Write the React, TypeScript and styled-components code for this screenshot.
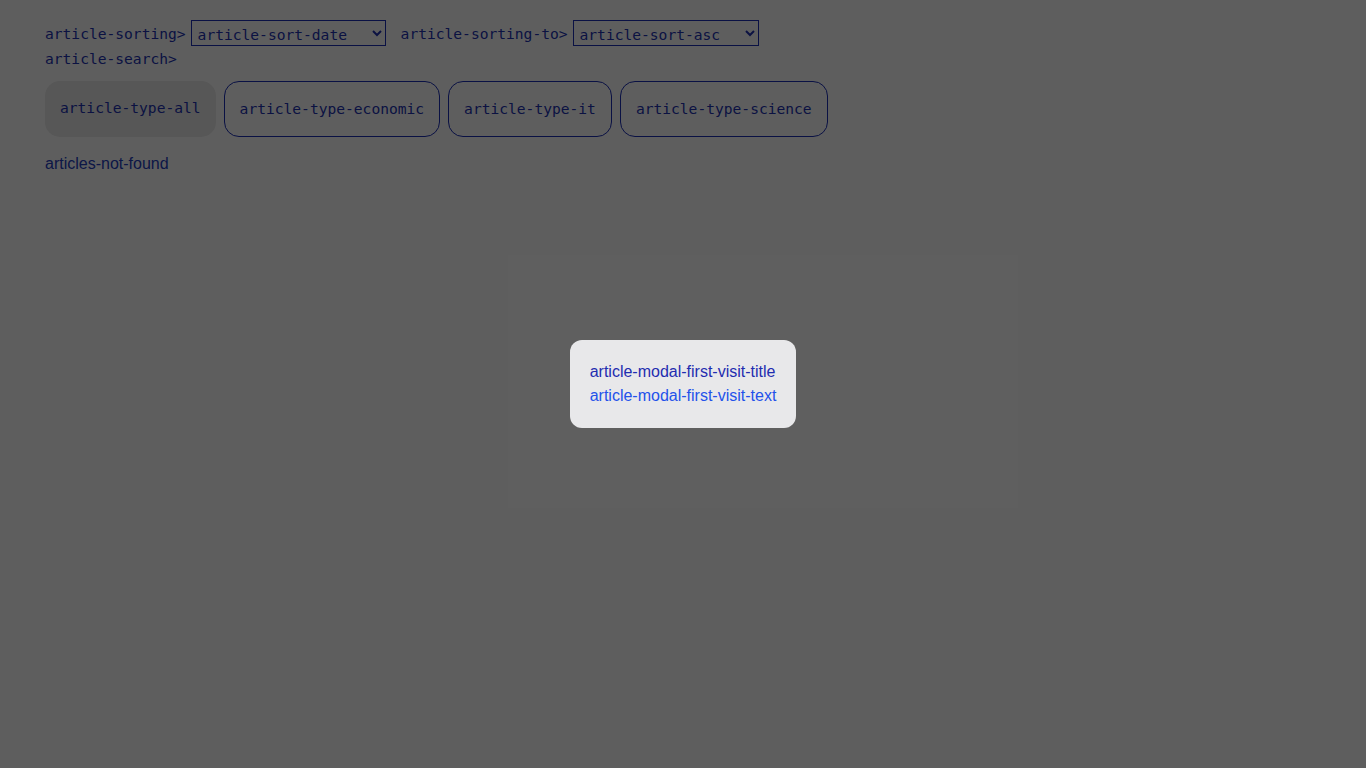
import React from "react";
import styled, { createGlobalStyle } from "styled-components";

const Global = createGlobalStyle`
  html, body { margin: 0; padding: 0; background: #ffffff; }
  body { font-family: "Liberation Sans", Arial, sans-serif; }
`;

const Page = styled.div`
  padding: 20px 45px;
  font-family: "DejaVu Sans Mono", "Liberation Mono", monospace;
  font-size: 14.6px;
  color: #2233b4;
`;

const SortRow = styled.div`
  display: flex;
  align-items: center;
  height: 26px;
  gap: 15px;
`;

const Field = styled.label`
  display: flex;
  align-items: center;
  gap: 5px;
  white-space: nowrap;
`;

const Select = styled.select<{ $w: number }>`
  width: ${(p) => p.$w}px;
  height: 26px;
  box-sizing: border-box;
  border: 1px solid #1c2fb8;
  border-radius: 0;
  background: transparent;
  color: #2233b4;
  font-family: "DejaVu Sans Mono", "Liberation Mono", monospace;
  font-size: 14.6px;
  padding: 2px 2px 0;
  margin: 0;
`;

const SearchRow = styled.div`
  margin-top: 4px;
  height: 18px;
  line-height: 18px;
`;

const TypeRow = styled.div`
  display: flex;
  gap: 8px;
  margin-top: 13px;
`;

const TypeButton = styled.button<{ $active?: boolean }>`
  height: 56px;
  box-sizing: border-box;
  padding: 0 15px;
  border-radius: 15px;
  border: ${(p) => (p.$active ? "none" : "1px solid #1c2fb8")};
  background: ${(p) => (p.$active ? "#ebebeb" : "transparent")};
  color: #2233b4;
  font-family: "DejaVu Sans Mono", "Liberation Mono", monospace;
  font-size: 14.6px;
  line-height: 1;
  padding-bottom: ${(p) => (p.$active ? "2px" : "0")};
  cursor: pointer;
`;

const NotFound = styled.p`
  margin: 18px 0 0;
  font-family: "Liberation Sans", Arial, sans-serif;
  font-size: 16px;
  line-height: 18px;
  color: #2440c0;
`;

const Overlay = styled.div`
  position: fixed;
  inset: 0;
  background: rgba(0, 0, 0, 0.63);
  display: flex;
  align-items: center;
  justify-content: center;
`;

const Ghost = styled.div`
  position: absolute;
  left: 508px;
  top: 255px;
  width: 510px;
  height: 253px;
  background: rgba(255, 255, 255, 0.004);
`;

const Modal = styled.div`
  position: relative;
  background: #e8e8ea;
  border-radius: 12px;
  padding: 20px;
  font-family: "Liberation Sans", Arial, sans-serif;
  font-size: 16px;
  line-height: 24px;
`;

const ModalTitle = styled.div`
  color: #1f2db0;
`;

const ModalText = styled.div`
  color: #2352ea;
`;

export default function App() {
  return (
    <>
      <Global />
      <Page>
        <SortRow>
          <Field>
            article-sorting&gt;
            <Select $w={195} defaultValue="date">
              <option value="date">article-sort-date</option>
              <option value="title">article-sort-title</option>
            </Select>
          </Field>
          <Field>
            article-sorting-to&gt;
            <Select $w={186} defaultValue="asc">
              <option value="asc">article-sort-asc</option>
              <option value="desc">article-sort-desc</option>
            </Select>
          </Field>
        </SortRow>
        <SearchRow>article-search&gt;</SearchRow>
        <TypeRow>
          <TypeButton $active>article-type-all</TypeButton>
          <TypeButton>article-type-economic</TypeButton>
          <TypeButton>article-type-it</TypeButton>
          <TypeButton>article-type-science</TypeButton>
        </TypeRow>
        <NotFound>articles-not-found</NotFound>
      </Page>
      <Overlay>
        <Ghost />
        <Modal>
          <ModalTitle>article-modal-first-visit-title</ModalTitle>
          <ModalText>article-modal-first-visit-text</ModalText>
        </Modal>
      </Overlay>
    </>
  );
}
